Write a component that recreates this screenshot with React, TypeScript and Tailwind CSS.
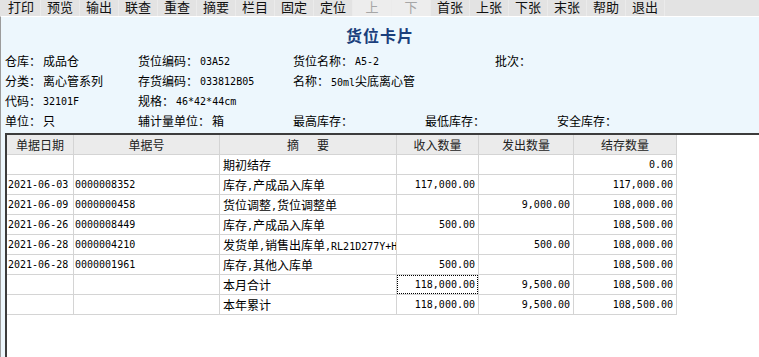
import React from "react";

const toolbar = ["打印","预览","输出","联查","重查","摘要","栏目","固定","定位","上","下","首张","上张","下张","末张","帮助","退出"];

const rows: string[][] = [
  ["", "", "期初结存", "", "", "0.00"],
  ["2021-06-03", "0000008352", "库存,产成品入库单", "117,000.00", "", "117,000.00"],
  ["2021-06-09", "0000000458", "货位调整,货位调整单", "", "9,000.00", "108,000.00"],
  ["2021-06-26", "0000008449", "库存,产成品入库单", "500.00", "", "108,500.00"],
  ["2021-06-28", "0000004210", "发货单,销售出库单,RL21D277Y+HT", "", "500.00", "108,000.00"],
  ["2021-06-28", "0000001961", "库存,其他入库单", "500.00", "", "108,500.00"],
  ["", "", "本月合计", "118,000.00", "9,500.00", "108,500.00"],
  ["", "", "本年累计", "118,000.00", "9,500.00", "108,500.00"],
];

function Mixed({ text }: { text: string }) {
  const parts = text.split(/([A-Za-z0-9+\-*.,]+)/);
  return (
    <>
      {parts.map((p, i) =>
        p === "" ? null : /^[A-Za-z0-9+\-*.,]+$/.test(p) ? (
          <span key={i} className="font-['DejaVu_Sans_Mono',monospace] text-[10px] whitespace-pre">{p}</span>
        ) : (
          <span key={i} className="text-[12px]">{p}</span>
        )
      )}
    </>
  );
}

function Field({ label, value, w }: { label: string; value?: string; w?: string }) {
  return (
    <div className={`flex items-center whitespace-nowrap ${w ?? ""}`}>
      <span className="text-[12px]">{label}</span>
      {value ? (
        <span className="ml-[2px] flex items-baseline">
          <Mixed text={value} />
        </span>
      ) : null}
    </div>
  );
}

export default function App() {
  return (
    <div className="w-[759px] h-[357px] overflow-hidden bg-white flex flex-col font-['Noto_Sans_CJK_SC',sans-serif] text-black">
      <div className="h-[16px] shrink-0 bg-[#e3e3e3] flex items-start pl-[2px] overflow-hidden">
        {toolbar.map((t, i) => {
          const dis = i === 9 || i === 10;
          return (
            <div
              key={t + i}
              className={`w-[39px] h-[16px] flex justify-center border-r border-[#ebebeb] ${dis ? "bg-[#ededed] text-[#a6a6a6]" : "text-[#111]"}`}
            >
              <span className="text-[13px] leading-[13px]">{t}</span>
            </div>
          );
        })}
      </div>
      <div className="flex-1 flex flex-col border-l border-[#9c9c9c] bg-[#edf7fd] border-t border-t-white">
        <div className="h-[20px] mt-[8px] leading-[20px] text-center text-[16px] font-bold tracking-[1px] text-[#1b3f7c]">
          货位卡片
        </div>
        <div className="mt-[6px] mb-[2px] pl-[4px] flex flex-col">
          <div className="h-[20px] flex">
            <Field label="仓库：" value="成品仓" w="w-[133px]" />
            <Field label="货位编码：" value="03A52" w="w-[155px]" />
            <Field label="货位名称：" value="A5-2" w="w-[202px]" />
            <Field label="批次：" />
          </div>
          <div className="h-[20px] flex">
            <Field label="分类：" value="离心管系列" w="w-[133px]" />
            <Field label="存货编码：" value="033812B05" w="w-[155px]" />
            <Field label="名称：" value="50ml尖底离心管" />
          </div>
          <div className="h-[20px] flex">
            <Field label="代码：" value="32101F" w="w-[133px]" />
            <Field label="规格：" value="46*42*44cm" w="w-[155px]" />
          </div>
          <div className="h-[20px] flex">
            <Field label="单位：" value="只" w="w-[133px]" />
            <Field label="辅计量单位：" value="箱" w="w-[155px]" />
            <Field label="最高库存：" w="w-[132px]" />
            <Field label="最低库存：" w="w-[132px]" />
            <Field label="安全库存：" />
          </div>
        </div>
        <div className="flex-1 ml-[4px] border-l-2 border-t-2 border-[#3c3c3c] bg-white">
          <div className="grid grid-cols-[67px_146px_177px_82px_95px_103px] w-max">
            {["单据日期", "单据号", "摘要", "收入数量", "发出数量", "结存数量"].map((h) => (
              <div
                key={h}
                className="h-[20px] bg-[#ebebeb] border-r border-b border-[#d4d4d4] flex items-center justify-center text-[12px] text-[#222]"
              >
                {h === "摘要" ? (
                  <span className="flex gap-[18px]">
                    <span>摘</span>
                    <span>要</span>
                  </span>
                ) : (
                  h
                )}
              </div>
            ))}
            {rows.map((r, ri) =>
              r.map((c, ci) => {
                const right = ci >= 3;
                const focus = ri === 6 && ci === 3;
                return (
                  <div
                    key={ri + "-" + ci}
                    className={`h-[20px] border-r border-b border-[#d4d4d4] overflow-hidden whitespace-nowrap flex items-center ${right ? "justify-end pr-[3px]" : ci === 2 ? "pl-[3px]" : "pl-[1px]"}`}
                  >
                    {focus ? (
                      <div className="-mr-[3px] w-[81px] h-[19px] border border-dotted border-black flex items-center justify-end pr-[2px]">
                        <Mixed text={c} />
                      </div>
                    ) : (
                      <span className="flex items-baseline">
                        <Mixed text={c} />
                      </span>
                    )}
                  </div>
                );
              })
            )}
          </div>
        </div>
      </div>
    </div>
  );
}
